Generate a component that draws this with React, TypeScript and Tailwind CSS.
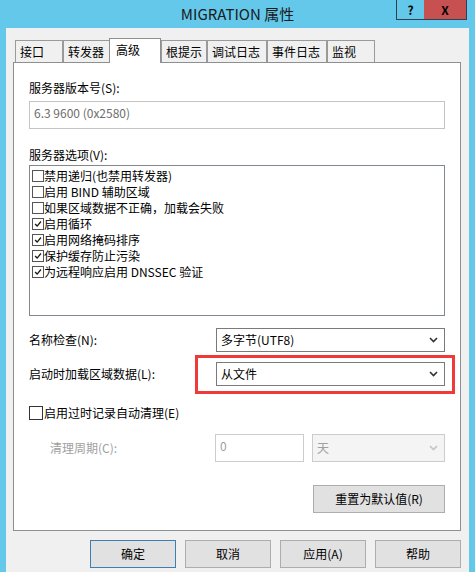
import React from "react";

// Windows-Dialog "MIGRATION 属性" – Register "高级"
const FONT = "font-['Noto_Sans_CJK_SC',sans-serif]";

const TABS = [
  { label: "接口", w: "w-[48px]" },
  { label: "转发器", w: "w-[47px]" },
  { label: "高级", w: "w-[52px]", active: true },
  { label: "根提示", w: "w-[46px]" },
  { label: "调试日志", w: "w-[60px]" },
  { label: "事件日志", w: "w-[60px]" },
  { label: "监视", w: "w-[48px]" },
];

const OPTIONS = [
  { label: "禁用递归(也禁用转发器)", checked: false },
  { label: "启用 BIND 辅助区域", checked: false },
  { label: "如果区域数据不正确，加载会失败", checked: false },
  { label: "启用循环", checked: true },
  { label: "启用网络掩码排序", checked: true },
  { label: "保护缓存防止污染", checked: true },
  { label: "为远程响应启用 DNSSEC 验证", checked: true },
];

function Check({ size = "w-[12px] h-[12px]" }: { size?: string }) {
  return (
    <svg viewBox="0 0 12 12" className={size}>
      <polyline points="2.5,6 5,8.5 9.5,3" fill="none" stroke="#1a1a1a" strokeWidth="1.6" />
    </svg>
  );
}

function Chevron({ color = "#333" }: { color?: string }) {
  return (
    <svg viewBox="0 0 9 6" className="w-[9px] h-[6px]">
      <polyline points="1,1 4.5,4.5 8,1" fill="none" stroke={color} strokeWidth="1.6" />
    </svg>
  );
}

function Select({ value, disabled, w }: { value: string; disabled?: boolean; w: string }) {
  return (
    <div
      className={`${w} h-full flex items-center justify-between pl-[4px] pr-[6px] border ${
        disabled ? "border-[#cccccc] bg-[#f4f4f4] text-[#a0a0a0]" : "border-[#7a7a7a] bg-white text-black"
      }`}
    >
      <span>{value}</span>
      <Chevron color={disabled ? "#c4c4c4" : "#333"} />
    </div>
  );
}

function Button({ label, primary, w = "w-[86px]" }: { label: string; primary?: boolean; w?: string }) {
  return (
    <button
      type="button"
      className={`${w} h-[28px] bg-[#e1e1e1] border ${primary ? "border-[#3c7fb1]" : "border-[#adadad]"} text-black leading-[16px]`}
    >
      {label}
    </button>
  );
}

export default function App() {
  return (
    <div className={`w-[475px] h-[572px] bg-[#63c8ea] flex flex-col overflow-hidden text-[12px] ${FONT}`}>
      {/* Titelleiste */}
      <div className="relative h-[28px] shrink-0 flex items-center justify-center">
        <span className="text-[15px] leading-[20px] text-[#1a1a1a]">MIGRATION 属性</span>
        <div className="absolute top-0 left-[396px] flex">
          <div className="w-[28px] h-[20px] border-l border-b border-[#30424f] flex items-center justify-center font-bold text-[12px] leading-none">
            ?
          </div>
          <div className="w-[43px] h-[20px] bg-[#c75050] border-r border-b border-[#30424f] flex items-center justify-center font-bold text-[12px] leading-none">
            X
          </div>
        </div>
      </div>

      {/* Client-Bereich */}
      <div className="mx-[6px] flex-1 bg-[#f0f0f0] pt-[10px] pl-[7px] pr-[8px]">
        {/* Register */}
        <div className="h-[24px] flex items-end pl-[2px]">
          {TABS.map((t) =>
            t.active ? (
              <div
                key={t.label}
                className={`${t.w} relative z-10 -ml-px -mb-px h-[25px] bg-white border-t border-l border-r border-[#8e8f8f] pl-[6px] pt-[3px] leading-[16px]`}
              >
                {t.label}
              </div>
            ) : (
              <div
                key={t.label}
                className={`${t.w} h-[22px] bg-[#f0f0f0] border-t border-l border-r border-[#9a9a9a] pl-[4px] pt-[3px] leading-[16px]`}
              >
                {t.label}
              </div>
            )
          )}
        </div>

        {/* Registerinhalt */}
        <div className="h-[469px] bg-white border border-[#8e8f8f] px-[15px] pt-[17px] flex flex-col">
          <div className="leading-[16px]">服务器版本号(S):</div>
          <div className="mt-[5px] h-[28px] border border-[#c4c4c4] pl-[4px] pt-[3px] leading-[16px] text-[#6d6d6d]">
            6.3 9600 (0x2580)
          </div>

          <div className="mt-[18px] leading-[16px]">服务器选项(V):</div>
          <div className="mt-[2px] h-[151px] border border-[#828790] pt-[2px] pl-[2px]">
            {OPTIONS.map((o) => (
              <div key={o.label} className="h-[16px] flex items-center">
                <div className="w-[12px] h-[12px] border border-[#555] bg-white flex items-center justify-center">
                  {o.checked && <Check size="w-[10px] h-[10px]" />}
                </div>
                <span className="leading-[16px]">{o.label}</span>
              </div>
            ))}
          </div>

          <div className="mt-[12px] h-[24px] flex items-center justify-between">
            <span className="leading-[16px]">名称检查(N):</span>
            <Select value="多字节(UTF8)" w="w-[229px]" />
          </div>

          <div className="mt-[10px] h-[24px] flex items-center justify-between">
            <span className="leading-[16px]">启动时加载区域数据(L):</span>
            <div className="relative h-full">
              <Select value="从文件" w="w-[229px]" />
              <div className="absolute -left-[21px] -top-[7px] w-[260px] h-[39px] border-[3px] border-[#f03a3a]" />
            </div>
          </div>

          <div className="mt-[19px] h-[16px] flex items-center">
            <div className="w-[14px] h-[14px] border border-[#333] bg-white" />
            <span className="ml-px leading-[16px]">启用过时记录自动清理(E)</span>
          </div>

          <div className="mt-[13px] h-[28px] flex items-center">
            <span className="pl-[21px] leading-[16px] text-[#a0a0a0]">清理周期(C):</span>
            <div className="ml-auto flex h-full gap-[8px]">
              <div className="w-[89px] h-full border border-[#cccccc] bg-white pl-[4px] pt-[3px] leading-[16px] text-[#a0a0a0]">
                0
              </div>
              <Select value="天" disabled w="w-[133px]" />
            </div>
          </div>

          <div className="mt-[23px] flex justify-end">
            <Button label="重置为默认值(R)" w="w-[132px]" />
          </div>
        </div>

        {/* Dialog-Schaltflächen */}
        <div className="mt-[9px] flex justify-end gap-[9px]">
          <Button label="确定" primary />
          <Button label="取消" />
          <Button label="应用(A)" />
          <Button label="帮助" />
        </div>
      </div>
    </div>
  );
}
